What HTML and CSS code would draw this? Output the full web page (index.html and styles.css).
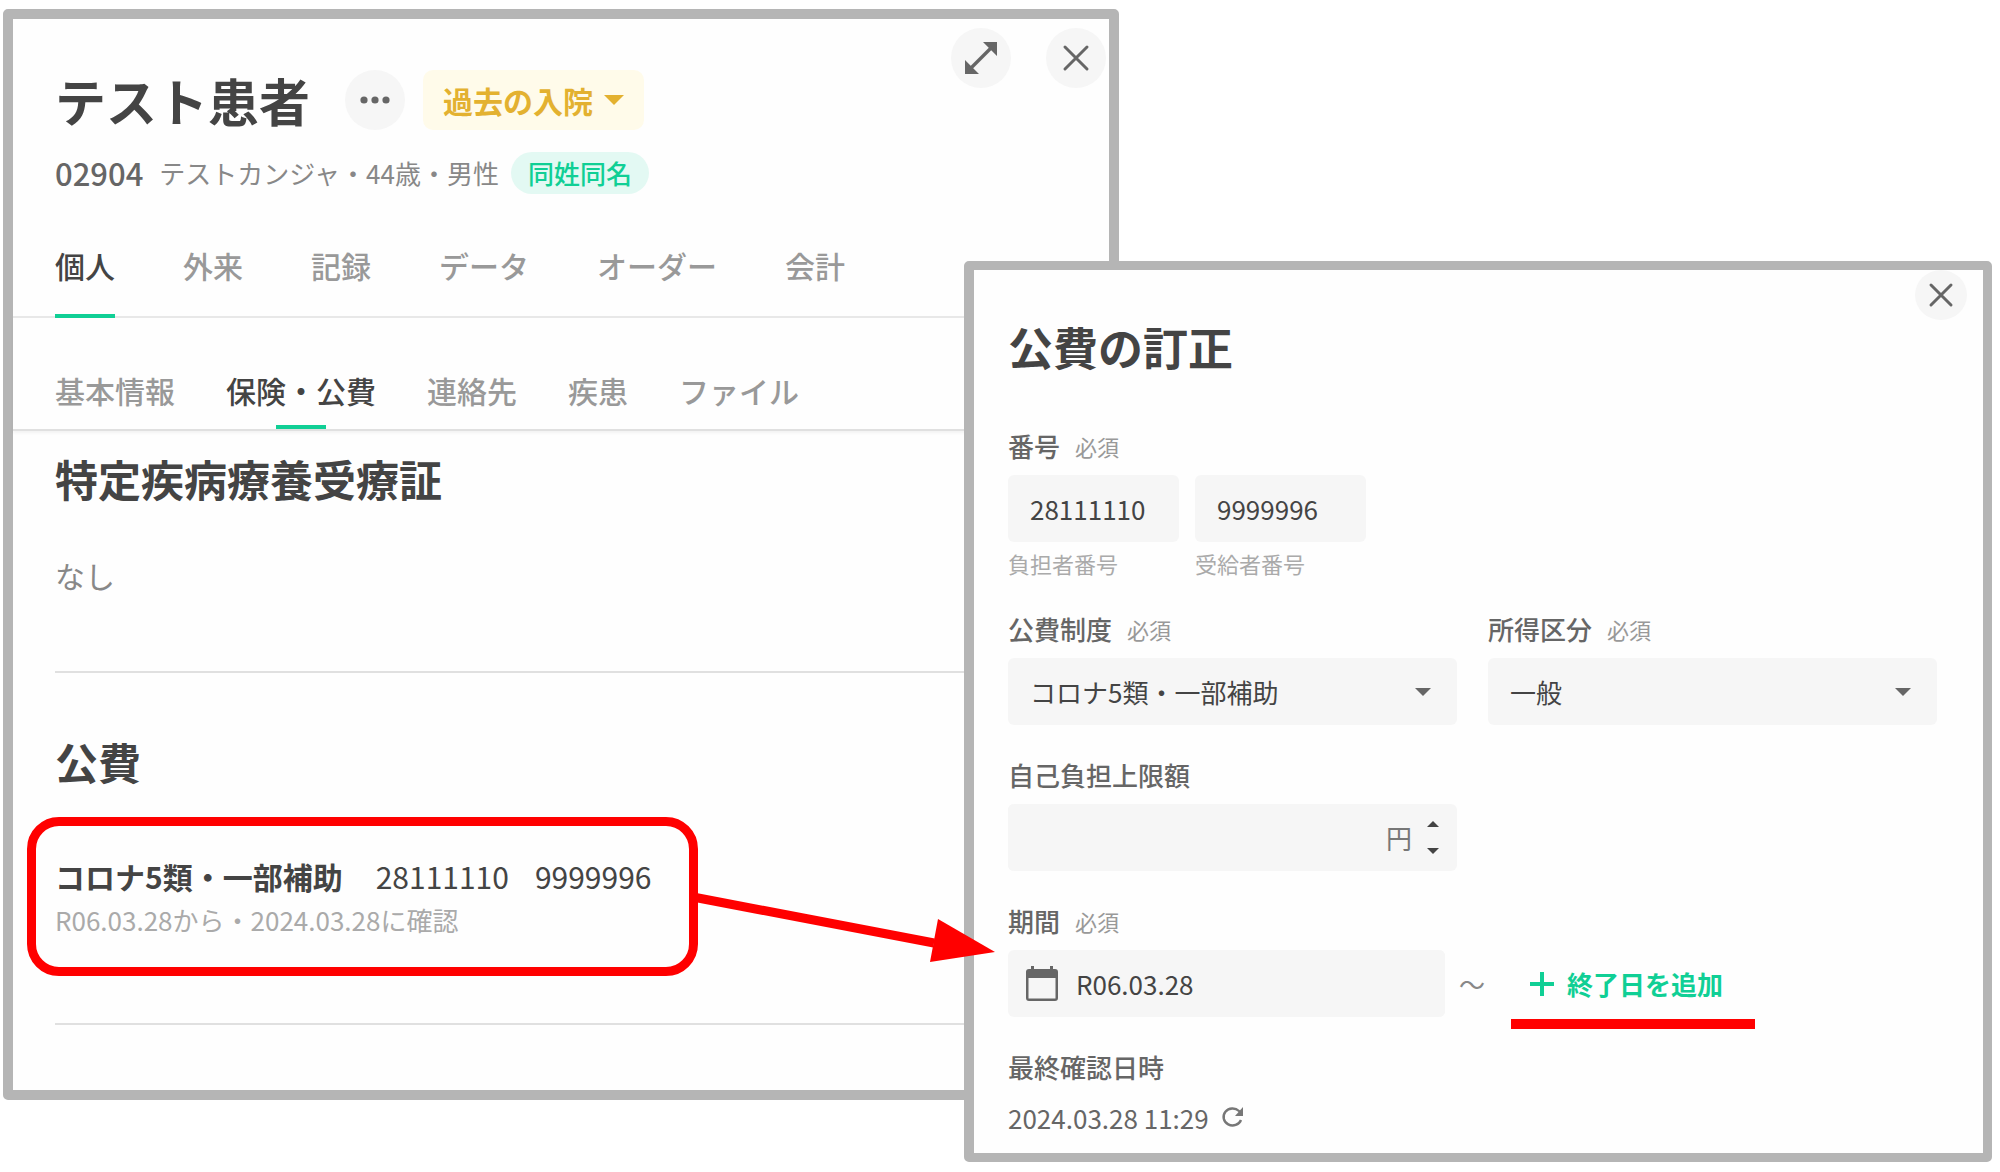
FILE: index.html
```html
<!DOCTYPE html>
<html lang="ja">
<head>
<meta charset="utf-8">
<meta name="viewport" content="width=device-width, initial-scale=1">
<title>公費の訂正</title>
<link rel="stylesheet" href="styles.css">
</head>
<body>
<div class="canvas">
  <main class="panel patient">
    <header class="patient-header">
      <div class="identity">
        <div class="name-row">
          <h1 class="patient-name">テスト患者</h1>
          <button class="round-button more" type="button" aria-label="その他">
            <svg width="30" height="8" viewBox="0 0 30 8" fill="currentColor"><circle cx="4" cy="4" r="3.6"/><circle cx="15" cy="4" r="3.6"/><circle cx="26" cy="4" r="3.6"/></svg>
          </button>
          <button class="history-button" type="button">過去の入院
            <svg width="20" height="10" viewBox="0 0 20 10" fill="currentColor"><path d="M0 0h20L10 10z"/></svg>
          </button>
        </div>
        <div class="meta-row">
          <span class="patient-id">02904</span>
          <span class="patient-meta">テストカンジャ・44歳・男性</span>
          <span class="same-name">同姓同名</span>
        </div>
      </div>
      <div class="window-controls">
        <button class="round-button" type="button" aria-label="拡大">
          <svg width="34" height="34" viewBox="0 0 34 34" fill="currentColor"><path d="M19 1h14v14zM1 19v14h14z"/><path d="M6 28L28 6" stroke="currentColor" stroke-width="3.4"/></svg>
        </button>
        <button class="round-button" type="button" aria-label="閉じる">
          <svg width="24" height="24" viewBox="0 0 24 24" fill="none" stroke="currentColor" stroke-width="3" stroke-linecap="round"><path d="M1 1l22 22M23 1L1 23"/></svg>
        </button>
      </div>
    </header>

    <nav class="tabs main-tabs" aria-label="患者メニュー">
      <button class="tab active" type="button">個人</button>
      <button class="tab" type="button">外来</button>
      <button class="tab" type="button">記録</button>
      <button class="tab" type="button">データ</button>
      <button class="tab" type="button">オーダー</button>
      <button class="tab" type="button">会計</button>
    </nav>
    <nav class="tabs sub-tabs" aria-label="個人メニュー">
      <button class="tab" type="button">基本情報</button>
      <button class="tab active" type="button">保険・公費</button>
      <button class="tab" type="button">連絡先</button>
      <button class="tab" type="button">疾患</button>
      <button class="tab" type="button">ファイル</button>
    </nav>

    <section class="section disease">
      <h2 class="section-title">特定疾病療養受療証</h2>
      <p class="empty">なし</p>
    </section>
    <section class="section subsidy">
      <h2 class="section-title">公費</h2>
      <div class="record">
        <div class="record-main">
          <strong class="record-name">コロナ5類・一部補助</strong>
          <span class="record-payer">28111110</span>
          <span>9999996</span>
        </div>
        <div class="record-sub">R06.03.28から・2024.03.28に確認</div>
        <svg class="arrow" width="310" height="68" viewBox="0 0 310 68" aria-hidden="true"><path d="M4 11l241 46" stroke="#f00" stroke-width="9"/><path d="M249 33l57 33-65 10z" fill="#f00"/></svg>
      </div>
    </section>
  </main>

  <section class="panel editor" aria-labelledby="editor-title">
    <header class="editor-header">
      <h2 class="editor-title" id="editor-title">公費の訂正</h2>
      <button class="round-button small" type="button" aria-label="閉じる">
        <svg width="22" height="22" viewBox="0 0 22 22" fill="none" stroke="currentColor" stroke-width="3" stroke-linecap="round"><path d="M1 1l20 20M21 1L1 21"/></svg>
      </button>
    </header>
    <form class="form">
      <div class="field" role="group" aria-labelledby="number-label">
        <div class="label-row"><span class="label" id="number-label">番号</span><span class="required">必須</span></div>
        <div class="number-pair">
          <div class="number-item">
            <input class="control" id="payer" type="text" value="28111110">
            <label class="hint" for="payer">負担者番号</label>
          </div>
          <div class="number-item">
            <input class="control" id="recipient" type="text" value="9999996">
            <label class="hint" for="recipient">受給者番号</label>
          </div>
        </div>
      </div>

      <div class="columns">
        <div class="field">
          <div class="label-row"><label class="label" for="system">公費制度</label><span class="required">必須</span></div>
          <div class="select-box"><select class="control" id="system"><option>コロナ5類・一部補助</option></select></div>
        </div>
        <div class="field">
          <div class="label-row"><label class="label" for="income">所得区分</label><span class="required">必須</span></div>
          <div class="select-box"><select class="control" id="income"><option>一般</option></select></div>
        </div>
      </div>

      <div class="columns">
        <div class="field">
          <div class="label-row"><label class="label" for="limit">自己負担上限額</label></div>
          <div class="amount">
            <input class="control amount-input" id="limit" type="text" inputmode="numeric">
            <span class="unit">円</span>
            <div class="stepper">
              <button type="button" aria-label="増やす"><svg width="12" height="6" viewBox="0 0 12 6" fill="currentColor"><path d="M6 0l6 6H0z"/></svg></button>
              <button type="button" aria-label="減らす"><svg width="12" height="6" viewBox="0 0 12 6" fill="currentColor"><path d="M0 0h12L6 6z"/></svg></button>
            </div>
          </div>
        </div>
      </div>

      <div class="field">
        <div class="label-row"><label class="label" for="start">期間</label><span class="required">必須</span></div>
        <div class="period">
          <div class="date-box">
            <svg width="32" height="36" viewBox="0 0 32 36" fill="currentColor"><path d="M5 0h3v3h16V0h3v3h2a3 3 0 0 1 3 3v26a3 3 0 0 1-3 3H3a3 3 0 0 1-3-3V6a3 3 0 0 1 3-3h2zM2.500 12v20.500h27V12z"/></svg>
            <input class="control date-input" id="start" type="text" value="R06.03.28">
          </div>
          <span class="tilde">～</span>
          <button class="add-end" type="button">
            <svg width="24" height="24" viewBox="0 0 24 24" fill="none" stroke="currentColor" stroke-width="4"><path d="M12 0v24M0 12h24"/></svg>
            終了日を追加
          </button>
        </div>
      </div>

      <div class="field">
        <div class="label-row"><span class="label">最終確認日時</span></div>
        <div class="confirmed">
          <span>2024.03.28 11:29</span>
          <button class="refresh" type="button" aria-label="更新">
            <svg width="22" height="22" viewBox="0 0 22 22" fill="none" stroke="currentColor" stroke-width="2.400"><path d="M19 13a9 8.500 0 1 1-2-9l2 2"/><path d="M21 0v9h-8z" fill="currentColor" stroke="none"/></svg>
          </button>
        </div>
      </div>
    </form>
  </section>
</div>
</body>
</html>
```

FILE: styles.css
```css
*, *::before, *::after { box-sizing: border-box; }

body {
  margin: 0;
  background: #fff;
  color: #444;
  font-family: "Noto Sans CJK JP", sans-serif;
  font-size: 26px;
  line-height: 32px;
}

h1, h2, p { margin: 0; }

button, input, select {
  margin: 0;
  padding: 0;
  border: 0;
  background: none;
  color: inherit;
  font: inherit;
}

svg { display: block; flex: none; overflow: visible; }

/* Two windows that overlap in the middle column */
.canvas {
  display: grid;
  grid-template-columns: minmax(0, 961fr) minmax(0, 155fr) minmax(0, 873fr);
  align-items: start;
  padding: 9px 8px 10px 3px;
}

.panel {
  grid-row: 1;
  border: 10px solid #b5b5b5;
  border-radius: 5px;
  background: #fefefe;
}

.patient { grid-column: 1 / 3; padding-bottom: 65px; }
.editor { grid-column: 2 / 4; margin-top: 252px; border-width: 9px 9px 9px 10px; }

.round-button {
  display: flex;
  flex: none;
  align-items: center;
  justify-content: center;
  width: 60px;
  height: 60px;
  border-radius: 50%;
  background: #f6f6f6;
  color: #666;
}
.round-button.small { width: 52px; height: 50px; }

/* Patient window */
.patient-header {
  display: flex;
  align-items: flex-start;
  justify-content: space-between;
  padding: 9px 3px 0 42px;
}
.identity { padding-top: 42px; }
.name-row { display: flex; align-items: center; }
.patient-name { font-size: 51px; line-height: 60px; font-weight: 700; }
.more { margin-left: 35px; }
.history-button {
  display: flex;
  align-items: center;
  gap: 11px;
  height: 60px;
  margin-left: 18px;
  padding: 0 20px;
  border-radius: 10px;
  background: #fffbea;
  color: #e3b130;
  font-size: 30px;
  font-weight: 700;
}
.meta-row { display: flex; align-items: center; margin-top: 22px; }
.patient-id { color: #666; font-size: 31px; font-weight: 500; }
.patient-meta { margin-left: 16px; color: #888; }
.same-name {
  margin-left: 12px;
  padding: 5px 17px;
  border-radius: 21px;
  background: #e3f9f3;
  color: #10cf95;
  font-weight: 500;
}
.window-controls { display: flex; gap: 35px; }

.tabs { display: flex; padding-left: 42px; }
.tab { color: #999; font-size: 30px; line-height: 40px; font-weight: 500; }
.tab.active { color: #444; }
.main-tabs { gap: 68px; margin-top: 51px; box-shadow: inset 0 -2px #e8e8e8; }
.main-tabs .tab { padding-bottom: 29px; border-bottom: 4px solid transparent; }
.main-tabs .tab.active { border-color: #10cf95; }
.sub-tabs {
  gap: 51px;
  padding-top: 52px;
  border-bottom: 2px solid #e0e0e0;
  box-shadow: 0 2px 3px rgba(0, 0, 0, 0.05);
}
.sub-tabs .tab { padding-bottom: 19px; }
.sub-tabs .tab.active {
  background: linear-gradient(#10cf95, #10cf95) center bottom / 50px 4px no-repeat;
}

.section { margin-left: 42px; border-bottom: 2px solid #e0e0e0; }
.section-title { font-size: 43px; line-height: 60px; font-weight: 700; }
.disease { padding: 17px 0 76px; }
.empty { margin-top: 47px; color: #888; font-size: 30px; line-height: 40px; }
.subsidy { padding: 58px 0 47px; }

.record {
  position: relative;
  width: 671px;
  margin: 26px 0 0 -28px;
  padding: 30px 19px 29px;
  border: 9px solid #f00;
  border-radius: 32px;
}
.record-main { display: flex; font-size: 30px; line-height: 40px; }
.record-name { margin-right: 33px; font-weight: 700; }
.record-payer { margin-right: 26px; }
.record-sub { margin-top: 6px; color: #aaa; line-height: 36px; }
.arrow { position: absolute; z-index: 2; top: 60px; left: 100%; }

/* Editor window */
.editor-header {
  display: flex;
  align-items: flex-start;
  justify-content: space-between;
  padding: 0 16px 0 34px;
}
.editor-title { padding-top: 47px; font-size: 45px; line-height: 60px; font-weight: 700; }

.form {
  display: grid;
  gap: 34px;
  padding: 53px 46px 19px 34px;
}
.columns { display: grid; grid-template-columns: 1fr 1fr; gap: 31px; }
.label-row { display: flex; align-items: center; gap: 15px; margin-bottom: 13px; }
.label { color: #666; font-weight: 500; }
.required, .hint { color: #999; font-size: 22px; }
.control {
  display: block;
  width: 100%;
  height: 67px;
  padding: 0 22px;
  border-radius: 6px;
  background: #f6f6f6;
  appearance: none;
  outline: 0;
}

.number-pair { display: flex; gap: 16px; }
.number-item { width: 171px; }
.hint { display: block; margin: 7px 0 2px; line-height: 28px; color: #aaa; }

.select-box { position: relative; }
.select-box::after {
  content: "";
  position: absolute;
  top: 30px;
  right: 26px;
  border: 8px solid transparent;
  border-top-color: #666;
  border-bottom: 0;
  pointer-events: none;
}

.amount {
  display: flex;
  align-items: center;
  padding-right: 18px;
  border-radius: 6px;
  background: #f6f6f6;
}
.amount-input { flex: 1; min-width: 0; }
.unit { color: #777; }
.stepper { display: grid; gap: 21px; margin-left: 15px; }
.stepper button { display: block; }

.period { display: flex; align-items: center; }
.date-box {
  display: flex;
  align-items: center;
  width: 437px;
  padding-left: 18px;
  border-radius: 6px;
  background: #f6f6f6;
  color: #666;
}
.date-input { flex: 1; min-width: 0; padding-left: 18px; color: #444; }
.tilde { margin-left: 14px; color: #888; }
.add-end {
  position: relative;
  display: flex;
  align-items: center;
  gap: 13px;
  height: 67px;
  margin-left: 26px;
  padding: 0 32px 0 19px;
  color: #10cf95;
  font-weight: 700;
}
.add-end::after {
  content: "";
  position: absolute;
  top: 100%;
  left: 0;
  right: 0;
  height: 10px;
  margin-top: 2px;
  background: #f00;
}

.confirmed { display: flex; align-items: center; gap: 13px; padding-top: 6px; color: #666; }
.refresh { color: #777; }
```
